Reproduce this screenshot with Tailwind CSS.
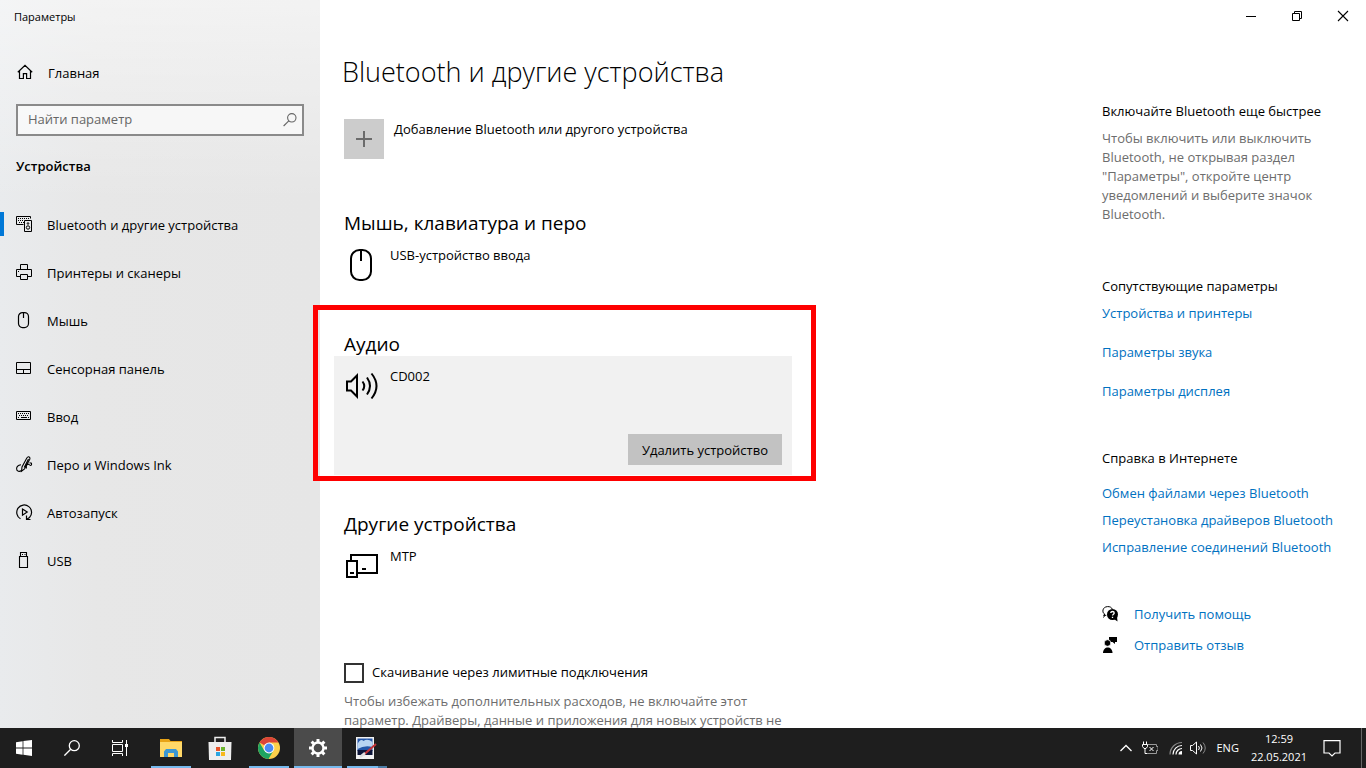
<!DOCTYPE html>
<html lang="ru">
<head>
<meta charset="utf-8">
<meta name="viewport" content="width=device-width, initial-scale=1">
<title>Параметры</title>
<script src="https://cdn.jsdelivr.net/npm/@tailwindcss/browser@4"></script>
</head>
<body class="flex h-screen flex-col overflow-hidden bg-white font-['Open_Sans','Noto_Sans',sans-serif] text-[13px] leading-5 text-black">

<div class="flex min-h-0 flex-1 overflow-hidden">

  <!-- Sidebar -->
  <aside class="flex w-80 shrink-0 flex-col bg-[#e6e6e6] bg-linear-to-r from-[#e9ebed] via-[#e7e7e7] via-30% to-[#e6e6e6]">
    <div class="flex flex-col bg-linear-to-b from-white/50 to-white/0">
      <div class="flex h-8 items-center px-3.5 pt-px text-[11px]">Параметры</div>
      <a href="#" class="mt-[17px] flex h-12 items-center gap-3 px-4">
        <svg class="size-5" viewBox="0 0 20 20" fill="none" stroke="black" stroke-width="1.2"><path d="M1.8 9.2 9 2.3l7.2 6.9M3.5 7.8v7.700h3.900v-4.900h3.200v4.900h3.900V7.800"/></svg>
        <span>Главная</span>
      </a>
      <div class="mx-4 mt-[7px] flex h-8 items-center border-2 border-[#8a8a8a] bg-white/60 pr-1 pl-2.5">
        <label for="search" class="sr-only">Найти параметр</label>
        <input id="search" type="text" placeholder="Найти параметр" class="h-full min-w-0 flex-1 bg-transparent pb-0.5 outline-none placeholder:text-[#666]">
        <svg class="size-4" viewBox="0 0 16 16" fill="none" stroke="#666" stroke-width="1.1"><circle cx="9.800" cy="5.800" r="4.200"/><path d="M6.800 8.800 1.600 14"/></svg>
      </div>
      <h2 class="mx-4 mt-5 mb-[25px] font-semibold">Устройства</h2>
    </div>
    <nav class="flex flex-col">
      <a href="#" class="relative flex h-12 items-center gap-[13px] px-4">
        <span class="absolute top-[11px] left-0 h-6 w-1 bg-[#0078d7]"></span>
        <svg class="size-4.5 shrink-0" viewBox="0 0 18 18" fill="none" stroke="black"><path d="M7.500 8.500H.5v-8h14v2"/><path d="M2 2.500h11M2 4.500h6M3 6.500h5" stroke-dasharray="1 1"/><path d="M8.500 4.500h7v11h-7z"/><circle cx="12" cy="11.500" r="1.700"/><circle cx="12" cy="7.500" r=".8"/></svg>
        <span>Bluetooth и другие устройства</span>
      </a>
      <a href="#" class="flex h-12 items-center gap-[13px] px-4">
        <svg class="size-4.5 shrink-0" viewBox="0 0 18 18" fill="none" stroke="black"><path d="M4.500 5.500v-5h7v5M4.500 12.500h-4v-7h15v7h-4M4.500 10.500h7v5h-7zM2 7.500h1"/></svg>
        <span>Принтеры и сканеры</span>
      </a>
      <a href="#" class="flex h-12 items-center gap-[13px] px-4">
        <svg class="size-4.5 shrink-0" viewBox="0 0 18 18" fill="none" stroke="black" stroke-width="1.200"><rect x="2.500" y=".6" width="10" height="15" rx="4"/><path d="M7.500 1v5"/></svg>
        <span>Мышь</span>
      </a>
      <a href="#" class="flex h-12 items-center gap-[13px] px-4">
        <svg class="size-4.5 shrink-0" viewBox="0 0 18 18" fill="none" stroke="black"><path d="M.5 2.500h14v11H.5zM.5 9.500h14M7.500 9.500v4"/></svg>
        <span>Сенсорная панель</span>
      </a>
      <a href="#" class="flex h-12 items-center gap-[13px] px-4">
        <svg class="size-4.5 shrink-0" viewBox="0 0 18 18" fill="none" stroke="black"><path d="M.5 3.500h14v8H.5z"/><path d="M2 5.500h11M3 7.500h10M2 9.500h2M12 9.500h1" stroke-dasharray="1 1"/><path d="M5 9.500h6"/></svg>
        <span>Ввод</span>
      </a>
      <a href="#" class="flex h-12 items-center gap-[13px] px-4">
        <svg class="size-4.5 shrink-0" viewBox="0 0 18 18" fill="none" stroke="black" stroke-width="1.100"><path d="M5.500 15.200 6 11 10.800 2Q12.500-.2 13.800 1.600 14.500 2.700 13 4.800L8.500 13ZM8.200 11.500 12.500 3"/><path d="M5 8.700C2.500 9 .6 10.500.6 12.800.6 15.500 3.500 16 5.500 14.500M10.500 12.500C9.500 9.500 11.500 7.500 13 8.500 14.500 10.200 16 9.500 15.500 7.300L13.500 6.800"/></svg>
        <span>Перо и Windows Ink</span>
      </a>
      <a href="#" class="flex h-12 items-center gap-[13px] px-4">
        <svg class="size-4.5 shrink-0" viewBox="0 0 18 18" fill="none" stroke="black" stroke-width="1.200"><path d="M4.500 14.800A7.400 7.400 0 1 1 13.500 13.500L10.800 15.300M10.500 11.500v4h4M6.500 5v6.200L11.200 8Z"/></svg>
        <span>Автозапуск</span>
      </a>
      <a href="#" class="flex h-12 items-center gap-[13px] px-4">
        <svg class="size-4.5 shrink-0" viewBox="0 0 18 18" fill="none" stroke="black" stroke-width="1.100"><path d="M4.500 4V.5h6V4M3.500 4.500h8v11h-8zM6 2.500h1M8.500 2.500h1"/></svg>
        <span>USB</span>
      </a>
    </nav>
  </aside>

  <div class="flex min-w-0 flex-1 flex-col">
    <!-- Window controls -->
    <div class="flex h-8 shrink-0 justify-end">
      <button type="button" aria-label="Свернуть" class="grid w-[46px] place-items-center"><svg class="size-3" viewBox="0 0 12 12" stroke="black"><path d="M1 6.500h10"/></svg></button>
      <button type="button" aria-label="Развернуть" class="grid w-[46px] place-items-center"><svg class="size-3" viewBox="0 0 12 12" fill="none" stroke="black"><path d="M1.500 3.500h7v7h-7zM3.500 3.500v-2h7v7h-2"/></svg></button>
      <button type="button" aria-label="Закрыть" class="grid w-[46px] place-items-center"><svg class="size-3" viewBox="0 0 12 12" stroke="black" stroke-width="1.100"><path d="m1 1 10 10M11 1 1 11"/></svg></button>
    </div>

    <div class="flex min-h-0 flex-1 justify-between">
      <!-- Device list -->
      <main class="w-[472px] shrink-0 pl-3.5">
        <h1 class="mt-6 ml-2 text-[27px] leading-8 font-light whitespace-nowrap">Bluetooth и другие устройства</h1>
        <button type="button" class="mt-[31px] ml-2.5 flex items-start gap-2.5 text-left">
          <span class="grid size-10 place-items-center bg-[#ccc]"><svg class="size-4" viewBox="0 0 16 16" stroke="#6b6b6b" stroke-width="2"><path d="M0 8h16M8 0v16"/></svg></span>
          <span>Добавление Bluetooth или другого устройства</span>
        </button>

        <section class="mt-[52px]">
          <h2 class="ml-2.5 text-[19px] leading-6">Мышь, клавиатура и перо</h2>
          <div class="flex gap-3 px-2.5 pt-2.5">
            <svg class="mt-1 size-[34px]" viewBox="0 0 34 34" fill="none" stroke="black" stroke-width="2"><rect x="7" y="1" width="20" height="30" rx="8.500"/><path d="M17 1v11"/></svg>
            <span>USB-устройство ввода</span>
          </div>
        </section>

        <section class="relative mt-[49px]">
          <h2 class="ml-2.5 text-[19px] leading-6">Аудио</h2>
          <div class="bg-[#f1f1f1] p-2.5">
            <div class="flex gap-3">
              <svg class="mt-1 size-[34px]" viewBox="0 0 34 34" fill="none" stroke="black" stroke-width="2"><path d="M3 11.500h4L13 5.500v21L7 20.500H3Z"/><path d="M18.500 11.500q3.500 4.500 0 9M23 7.500q6 8.500 0 17M27.500 3.500q10 12.500 0 25"/></svg>
              <span>CD002</span>
            </div>
            <div class="mt-[30px] flex justify-end">
              <button type="button" class="h-[31px] bg-[#c2c2c2] px-3.5">Удалить устройство</button>
            </div>
          </div>
          <div class="pointer-events-none absolute -top-[27px] -right-6 -bottom-1.5 -left-[21px] z-10 border-5 border-[#fe0000]"></div>
        </section>

        <section class="mt-[37px]">
          <h2 class="ml-2.5 text-[19px] leading-6">Другие устройства</h2>
          <div class="flex gap-3 px-2.5 pt-2.5">
            <svg class="mt-1 size-[34px]" viewBox="0 0 34 34" fill="none" stroke="black" stroke-width="2"><path d="M7 10V5h26v18H14M3 11h10v16H3zM6 23h4M18 19h4"/></svg>
            <span>MTP</span>
          </div>
        </section>

        <div class="mt-[79px] ml-2.5 flex items-start gap-2">
          <input id="metered" type="checkbox" class="size-5 appearance-none border-2 border-[#333] bg-white checked:bg-[#0078d7]">
          <label for="metered" class="leading-[18px]">Скачивание через лимитные подключения</label>
        </div>
        <p class="mt-[9px] ml-2.5 leading-[19px] text-[#6d6d6d]">Чтобы избежать дополнительных расходов, не включайте этот параметр. Драйверы, данные и приложения для новых устройств не</p>
      </main>

      <!-- Related information -->
      <aside class="w-[264px] shrink-0 pt-[69px] pr-7">
        <h3 class="whitespace-nowrap">Включайте Bluetooth еще быстрее</h3>
        <p class="mt-2 leading-[19px] text-[#6d6d6d]">Чтобы включить или выключить Bluetooth, не открывая раздел "Параметры", откройте центр уведомлений и выберите значок Bluetooth.</p>
        <h3 class="mt-[52px]">Сопутствующие параметры</h3>
        <div class="mt-[7px] flex flex-col items-start gap-[19px] text-[#0071c1]">
          <a href="#">Устройства и принтеры</a>
          <a href="#">Параметры звука</a>
          <a href="#">Параметры дисплея</a>
        </div>
        <h3 class="mt-[47px]">Справка в Интернете</h3>
        <div class="mt-[15px] flex flex-col items-start gap-[7px] whitespace-nowrap text-[#0071c1]">
          <a href="#">Обмен файлами через Bluetooth</a>
          <a href="#">Переустановка драйверов Bluetooth</a>
          <a href="#">Исправление соединений Bluetooth</a>
        </div>
        <div class="mt-[47px] flex flex-col items-start gap-[11px] text-[#0071c1]">
          <a href="#" class="flex items-center gap-4">
            <svg class="size-4" viewBox="0 0 16 16"><path d="M4.300 9.300H1.500L3 8.200C0 7.500-.3 1 5.500.6c2.500-.2 4.200 1 4.800 2.500M1.500 11.500 3 9" fill="none" stroke="black"/><circle cx="10.500" cy="8.500" r="5.500"/><path d="m12 13 3.500 2.500-.5-5z"/><path d="M8.800 7c0-2 3.400-2 3.400 0 0 1.200-1.700 1.200-1.700 2.600M10.500 10.800v1.200" stroke="white" stroke-width="1.300" fill="none"/></svg>
            <span>Получить помощь</span>
          </a>
          <a href="#" class="flex items-center gap-4">
            <svg class="size-4" viewBox="0 0 16 16"><path d="M7 0h8v5h-2v2l-2.500-2H7z"/><circle cx="5.500" cy="6" r="3.300" stroke="white" stroke-width=".8"/><path d="M1 16c0-7.500 9.500-7.500 9.500 0z"/></svg>
            <span>Отправить отзыв</span>
          </a>
        </div>
      </aside>
    </div>
  </div>
</div>

<!-- Taskbar -->
<footer class="relative z-20 flex h-10 shrink-0 justify-between bg-[#1e1e1e] text-white">
  <div class="flex">
    <button type="button" aria-label="Пуск" class="grid w-12 place-items-center"><svg class="size-4" viewBox="0 0 16 16" fill="white"><path d="M0 2.200 6.600 1.300v6.300H0zM7.400 1.100 16 0v7.600H7.400zM0 8.400h6.600v6.300L0 13.800zM7.400 8.400H16V16l-8.600-1.200z"/></svg></button>
    <button type="button" aria-label="Поиск" class="grid w-12 place-items-center"><svg class="size-4" viewBox="0 0 16 16" fill="none" stroke="white" stroke-width="1.300"><circle cx="10.300" cy="5.700" r="5"/><path d="M6.700 9.300.4 15.600"/></svg></button>
    <button type="button" aria-label="Представление задач" class="grid w-12 place-items-center"><svg class="size-4" viewBox="0 0 16 16" fill="none" stroke="white"><path d="M.5 0v2.500h10V0M.5 16v-2.500h10V16M.5 4.500h10v7H.5zM14.500 0v16"/><path d="M13 4h3v3h-3z" fill="white" stroke="none"/></svg></button>
    <div class="ml-[3px] flex gap-px">
      <button type="button" aria-label="Проводник" class="relative grid w-12 place-items-center"><svg class="size-6" viewBox="0 0 24 24"><path d="M1 3h9l1.500 2H23v16H1z" fill="#e8a317"/><path d="M1 6h22v15H1z" fill="#ffd868"/><path d="M5 21v-5.500L7 13h10l2 2.500V21h-4v-4H9v4z" fill="#3b97d3"/></svg><span class="absolute inset-x-1 bottom-0 h-0.5 bg-[#76b9ed]"></span></button>
      <button type="button" aria-label="Microsoft Store" class="grid w-12 place-items-center"><svg class="size-6" viewBox="0 0 24 24"><path d="M7 7V1.500h10V7" fill="none" stroke="#eee" stroke-width="1.500"/><path d="M.5 6h23l-.5 18H1z" fill="#eee"/><path d="M8 11h4v4H8z" fill="#e8532a"/><path d="M13 11h4v4h-4z" fill="#6cb52d"/><path d="M8 16h4v4H8z" fill="#2aa5e0"/><path d="M13 16h4v4h-4z" fill="#f8b91d"/></svg></button>
      <button type="button" aria-label="Google Chrome" class="relative grid w-12 place-items-center"><svg class="size-6" viewBox="0 0 24 24"><circle cx="12" cy="12" r="11" fill="#fcd04b"/><path d="M12 12 2.500 6.500A11 11 0 0 1 21.500 6.500H12z" fill="#dc4437"/><path d="M2.500 6.500A11 11 0 0 0 11.500 23l5-8.500L12 12 7.200 14.500z" fill="#1da462"/><circle cx="12" cy="12" r="5.400" fill="white"/><circle cx="12" cy="12" r="4.400" fill="#4a8af4"/></svg><span class="absolute inset-x-1 bottom-0 h-0.5 bg-[#76b9ed]"></span></button>
      <button type="button" aria-label="Параметры" class="relative grid w-12 place-items-center bg-[#4b4b4b]"><svg class="size-5" viewBox="0 0 20 20" fill="none" stroke="white"><circle cx="10" cy="10" r="5.500" stroke-width="2.400"/><g stroke-width="3"><path d="M10 1v3M10 16v3M1 10h3M16 10h3M3.600 3.600l2.200 2.200M14.200 14.200l2.200 2.200M16.400 3.600l-2.200 2.200M5.800 14.200l-2.200 2.200"/></g></svg><span class="absolute inset-x-0 bottom-0 h-0.5 bg-[#76b9ed]"></span></button>
      <button type="button" aria-label="Редактор изображений" class="relative grid w-12 place-items-center pr-1"><svg class="size-6" viewBox="0 0 24 24"><path d="M3 1h18v22H3z" fill="#f2f2f2"/><path d="M4.500 2.500h15V15h-15z" fill="#2456a8"/><path d="M4.500 8q3-6 6-3 4-3 9 1v5q-8-2-15 2z" fill="#b8d4f2"/><path d="M4.500 14h15v5h-15z" fill="#0c1438"/><path d="m11 18.500 12-10.500" stroke="#c43237" stroke-width="2"/><path d="m7 21 5-4" stroke="#ddd" stroke-width="2.500"/></svg><span class="absolute bottom-0 left-1 h-0.5 w-[31px] bg-[#76b9ed]"></span><span class="absolute right-1 bottom-0 h-0.5 w-[9px] bg-[#4c7da6]"></span></button>
    </div>
  </div>
  <div class="flex items-center pr-1 text-[11px]">
    <button type="button" aria-label="Скрытые значки" class="mr-2"><svg class="size-4" viewBox="0 0 16 16" fill="none" stroke="white" stroke-width="1.300"><path d="M2.500 11 8 5.500l5.500 5.500"/></svg></button>
    <button type="button" aria-label="Батарея" class="mr-2.5"><svg class="size-4" viewBox="0 0 16 16" fill="none" stroke="white"><path d="M1.500 1.500v3M4.500 1.500v3M.5 4.500h5v2L4 8.500H2L.5 6.500zM3 9v4.500h2"/><path d="M6 4.500h8.500v2H16v4h-1.500v3H5" stroke="#999"/><path d="m7.500 7 4 4M11.500 7l-4 4"/></svg></button>
    <button type="button" aria-label="Сеть" class="mr-1.5"><svg class="size-4" viewBox="0 0 16 16" fill="none" stroke="white" stroke-width="1.200"><path d="M2 14.500A12 12 0 0 1 14 2.500" stroke="#888"/><path d="M5 14.500a9 9 0 0 1 9-9M8 14.500a6 6 0 0 1 6-6"/><path d="M10.500 14.500a3.500 3.500 0 0 1 3.500-3.500v3.500z" fill="white" stroke="none"/></svg></button>
    <button type="button" aria-label="Громкость" class="mr-2.5"><svg class="size-4" viewBox="0 0 16 16" fill="none" stroke="white"><path d="M.5 5.500h2L6.500 2v12L2.500 10.500h-2zM8.500 6q1.800 2 0 4M10.500 4.500q3 3.500 0 7"/><path d="M13 2.500q4.500 5.500 0 11" stroke="#888"/></svg></button>
    <button type="button" class="mr-3">ENG</button>
    <button type="button" class="mr-4 text-center leading-[18px]">12:59<br>22.05.2021</button>
    <button type="button" aria-label="Уведомления" class="mr-5"><svg class="size-4.5" viewBox="0 0 18 18" fill="none" stroke="white" stroke-width="1.200"><path d="M1 1.600h16v12.400h-5L9 17l-3-3H1z"/></svg></button>
    <span class="h-full w-px bg-[#666]"></span>
  </div>
</footer>
</body>
</html>
